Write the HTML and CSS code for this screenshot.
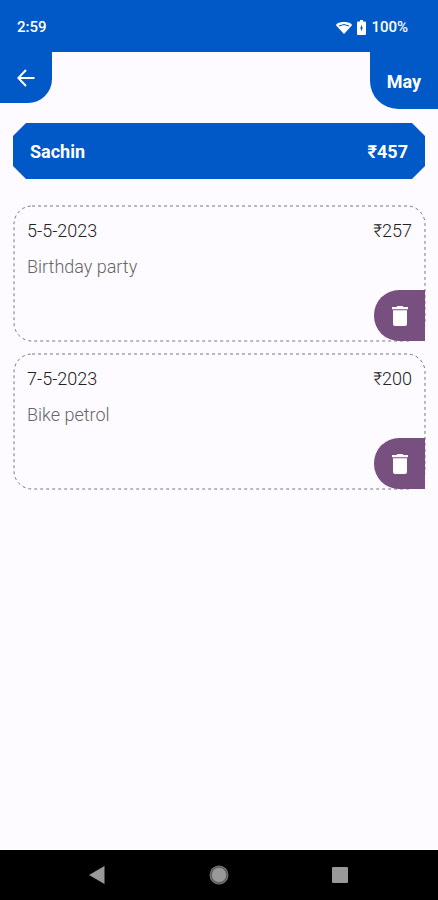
FILE: index.html
```html
<!DOCTYPE html>
<html lang="en">
<head>
<meta charset="utf-8">
<meta name="viewport" content="width=device-width, initial-scale=1">
<title>Sachin - May</title>
<link rel="stylesheet" href="styles.css">
</head>
<body>
<div class="status">
  <span class="clock">2:59</span>
  <div class="indicators">
    <svg class="wifi" viewBox="0 0 16 13" aria-hidden="true"><path d="M0 4.200C1 0 15 0 16 4.200L8 13z" fill="#fff"/><path d="M3 5Q8 2 13 5" fill="none" stroke="#0059c7" stroke-width="1"/></svg>
    <svg class="battery" viewBox="0 0 9 15" aria-hidden="true"><path d="M3 0h3v1.500h2q1 0 1 1V14q0 1-1 1H1q-1 0-1-1V2.500q0-1 1-1h2z" fill="#fff"/><path d="M5 4.500L3 8.500H4v3L6 7.500H5z" fill="#0059c7"/></svg>
    <span>100%</span>
  </div>
</div>
<header class="tabs">
  <button class="back" type="button" aria-label="Back">
    <svg viewBox="0 0 18 18" aria-hidden="true"><path d="M17.500 9H1.500M9 1L1.300 9L9 17" fill="none" stroke="#fff" stroke-width="2"/></svg>
  </button>
  <h1 class="month">May</h1>
</header>
<main>
  <section class="total"><h2>Sachin</h2><span>₹457</span></section>
  <article class="card">
    <svg class="outline" aria-hidden="true"><rect width="100%" height="100%" rx="18"/></svg>
    <div class="row"><time datetime="2023-05-05">5-5-2023</time><span>₹257</span></div>
    <p>Birthday party</p>
    <button class="delete" type="button" aria-label="Delete Birthday party">
      <svg viewBox="0 0 16 20" aria-hidden="true"><path d="M0 1h4.500l1-1h5l1 1H16v2.200H0zM1 4.200h14V18q0 2-2 2H3q-2 0-2-2z" fill="#fff"/></svg>
    </button>
  </article>
  <article class="card">
    <svg class="outline" aria-hidden="true"><rect width="100%" height="100%" rx="18"/></svg>
    <div class="row"><time datetime="2023-05-07">7-5-2023</time><span>₹200</span></div>
    <p>Bike petrol</p>
    <button class="delete" type="button" aria-label="Delete Bike petrol">
      <svg viewBox="0 0 16 20" aria-hidden="true"><path d="M0 1h4.500l1-1h5l1 1H16v2.200H0zM1 4.200h14V18q0 2-2 2H3q-2 0-2-2z" fill="#fff"/></svg>
    </button>
  </article>
</main>
<nav class="system">
  <button type="button" aria-label="System back"><svg viewBox="0 0 20 20" aria-hidden="true"><path d="M2 10L17.500 1v18z"/></svg></button>
  <button type="button" aria-label="Home"><svg viewBox="0 0 20 20" aria-hidden="true"><circle cx="10" cy="10" r="9.500" fill="#777"/><circle cx="10" cy="10" r="8" fill="none" stroke="#555" stroke-width="1"/><circle cx="10" cy="10" r="7"/></svg></button>
  <button type="button" aria-label="Recent apps"><svg viewBox="0 0 20 20" aria-hidden="true"><rect x="2" y="2" width="16" height="16" rx="1"/></svg></button>
</nav>
</body>
</html>
```
FILE: styles.css
```css
:root {
  --blue: #0059c7;
  --purple: #775080;
  --page: #fdfbff;
}
* { box-sizing: border-box; }
body {
  margin: 0;
  min-height: 100vh;
  display: flex;
  flex-direction: column;
  background: var(--page);
  font: 18px/20px Roboto, "Noto Sans", sans-serif;
  color: #222;
}
h1, h2, p { margin: 0; font-size: inherit; }
button { border: 0; padding: 0; cursor: pointer; }
svg { display: block; }

.status {
  height: 52px;
  padding: 2px 30px 0 17px;
  display: flex;
  align-items: center;
  justify-content: space-between;
  background: var(--blue);
  color: #fff;
  font-size: 15px;
  font-weight: 500;
}
.indicators { display: flex; align-items: center; gap: 5px; }
.wifi { width: 16px; height: 13px; }
.battery { width: 9px; height: 15px; }

.tabs {
  display: flex;
  align-items: flex-start;
  justify-content: space-between;
}
.back, .month {
  display: flex;
  align-items: center;
  justify-content: center;
  background: var(--blue);
  color: #fff;
}
.back {
  width: 52px;
  height: 51px;
  border-radius: 0 0 24px 0;
}
.back svg { width: 18px; height: 18px; }
.month {
  width: 68px;
  height: 57px;
  padding-top: 3px;
  border-radius: 0 0 0 28px;
}

main {
  flex: 1;
  display: flex;
  flex-direction: column;
  gap: 13px;
  padding: 14px 13px;
}
.total {
  display: flex;
  align-items: center;
  justify-content: space-between;
  height: 56px;
  margin-bottom: 14px;
  padding: 2px 17px 0;
  background: var(--blue);
  color: #fff;
  font-weight: 700;
  clip-path: polygon(13px 0, calc(100% - 13px) 0, 100% 13px, 100% calc(100% - 13px), calc(100% - 13px) 100%, 13px 100%, 0 calc(100% - 13px), 0 13px);
}

.card {
  position: relative;
  display: flex;
  flex-direction: column;
  height: 135px;
  margin-left: 1px;
  padding: 15px 0 0 13px;
  font-weight: 300;
}
.outline {
  position: absolute;
  inset: 0;
  width: 100%;
  height: 100%;
  overflow: visible;
}
.outline rect {
  fill: none;
  stroke: #777;
  stroke-width: 1px;
  stroke-dasharray: 3 3;
}
.row {
  display: flex;
  justify-content: space-between;
  padding-right: 13px;
}
.card p {
  margin-top: 16px;
  color: #666;
}
.delete {
  position: relative;
  display: flex;
  align-items: center;
  justify-content: center;
  align-self: flex-end;
  width: 51px;
  height: 51px;
  margin-top: auto;
  background: var(--purple);
  border-radius: 25px 0 0 25px;
}
.delete svg { width: 16px; height: 20px; }

.system {
  display: flex;
  align-items: center;
  justify-content: space-between;
  height: 50px;
  padding: 0 88px 0 87px;
  background: #000;
}
.system button { background: none; }
.system svg { width: 20px; height: 20px; fill: #999; }
```
